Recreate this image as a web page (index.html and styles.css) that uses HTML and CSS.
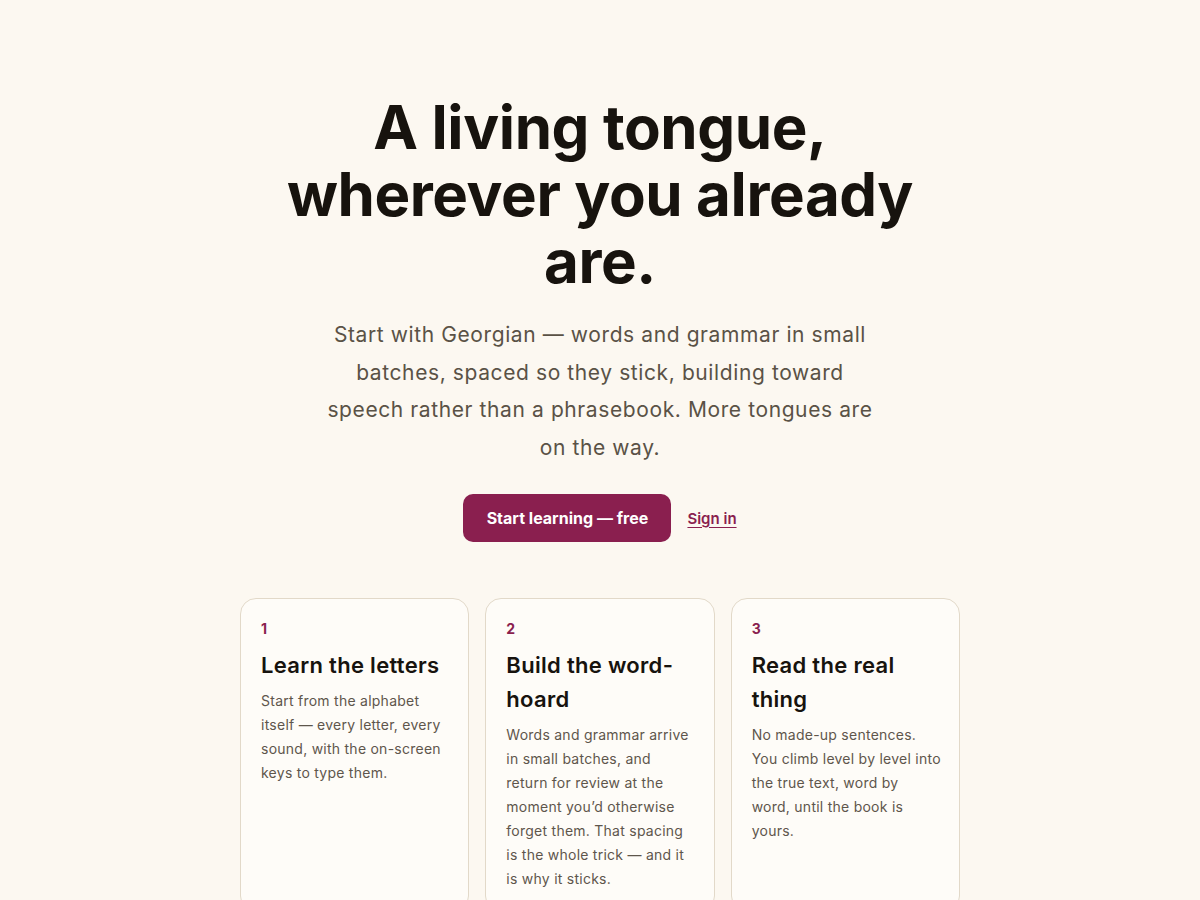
FILE: index.html
```html
<!DOCTYPE html>
<html lang="en">
<head>
<meta charset="utf-8">
<title>A living tongue</title>
<link rel="stylesheet" href="styles.css">
</head>
<body>
<main class="hero">
  <h1 class="title">A living tongue,<br>wherever you already<br>are.</h1>
  <p class="lead">Start with Georgian — words and grammar in small<br>batches, spaced so they stick, building toward<br>speech rather than a phrasebook. More tongues are<br>on the way.</p>
  <div class="actions">
    <a class="btn" href="#">Start learning — free</a>
    <a class="link" href="#">Sign in</a>
  </div>
  <section class="steps">
    <article class="card">
      <div class="num">1</div>
      <h2 class="card-title">Learn the letters</h2>
      <p class="card-text">Start from the alphabet<br>itself — every letter, every<br>sound, with the on-screen<br>keys to type them.</p>
    </article>
    <article class="card">
      <div class="num">2</div>
      <h2 class="card-title">Build the word-<br>hoard</h2>
      <p class="card-text">Words and grammar arrive<br>in small batches, and<br>return for review at the<br>moment you’d otherwise<br>forget them. That spacing<br>is the whole trick — and it<br>is why it sticks.</p>
    </article>
    <article class="card">
      <div class="num">3</div>
      <h2 class="card-title">Read the real<br>thing</h2>
      <p class="card-text">No made-up sentences.<br>You climb level by level into<br>the true text, word by<br>word, until the book is<br>yours.</p>
    </article>
  </section>
</main>
</body>
</html>
```
FILE: styles.css
```css
html, body {
  margin: 0;
  padding: 0;
  background: #fcf8f1;
}
body {
  font-family: "Inter", "Liberation Sans", sans-serif;
  color: #1a1510;
}
.hero {
  display: flex;
  flex-direction: column;
  align-items: center;
  padding-top: 94px;
  text-align: center;
}
.title {
  margin: 0;
  font-size: 60px;
  line-height: 67px;
  font-weight: 700;
  letter-spacing: -0.4px;
  color: #17130e;
}
.lead {
  margin: 21px 0 0;
  font-size: 21px;
  line-height: 37.5px;
  letter-spacing: 0.6px;
  color: #5a5246;
  white-space: nowrap;
}
.actions {
  margin-top: 28px;
  display: flex;
  align-items: center;
  gap: 16px;
}
.btn {
  display: flex;
  align-items: center;
  justify-content: center;
  width: 208px;
  height: 48px;
  box-sizing: border-box;
  border-radius: 10px;
  background: #8a1f4f;
  color: #fff;
  font-size: 16px;
  font-weight: 700;
  text-decoration: none;
}
.link {
  color: #8a1f4f;
  font-size: 15px;
  font-weight: 600;
  text-decoration: underline;
  text-underline-offset: 3px;
}
.steps {
  margin-top: 56px;
  width: 720px;
  display: grid;
  grid-template-columns: repeat(3, minmax(0, 1fr));
  gap: 16px;
  text-align: left;
}
.card {
  background: #fefcf8;
  border: 1px solid #e2d9c9;
  border-radius: 16px;
  padding: 20px 20px 20px;
}
.num {
  font-size: 14px;
  line-height: 20px;
  font-weight: 700;
  color: #8a1f4f;
}
.card-title {
  margin: 9px 0 0;
  font-size: 22px;
  line-height: 34px;
  font-weight: 600;
  letter-spacing: 0.3px;
  color: #17130e;
}
.card-text {
  margin: 7px 0 0;
  font-size: 14px;
  line-height: 24px;
  letter-spacing: 0.25px;
  color: #5e564c;
  white-space: nowrap;
}
```
